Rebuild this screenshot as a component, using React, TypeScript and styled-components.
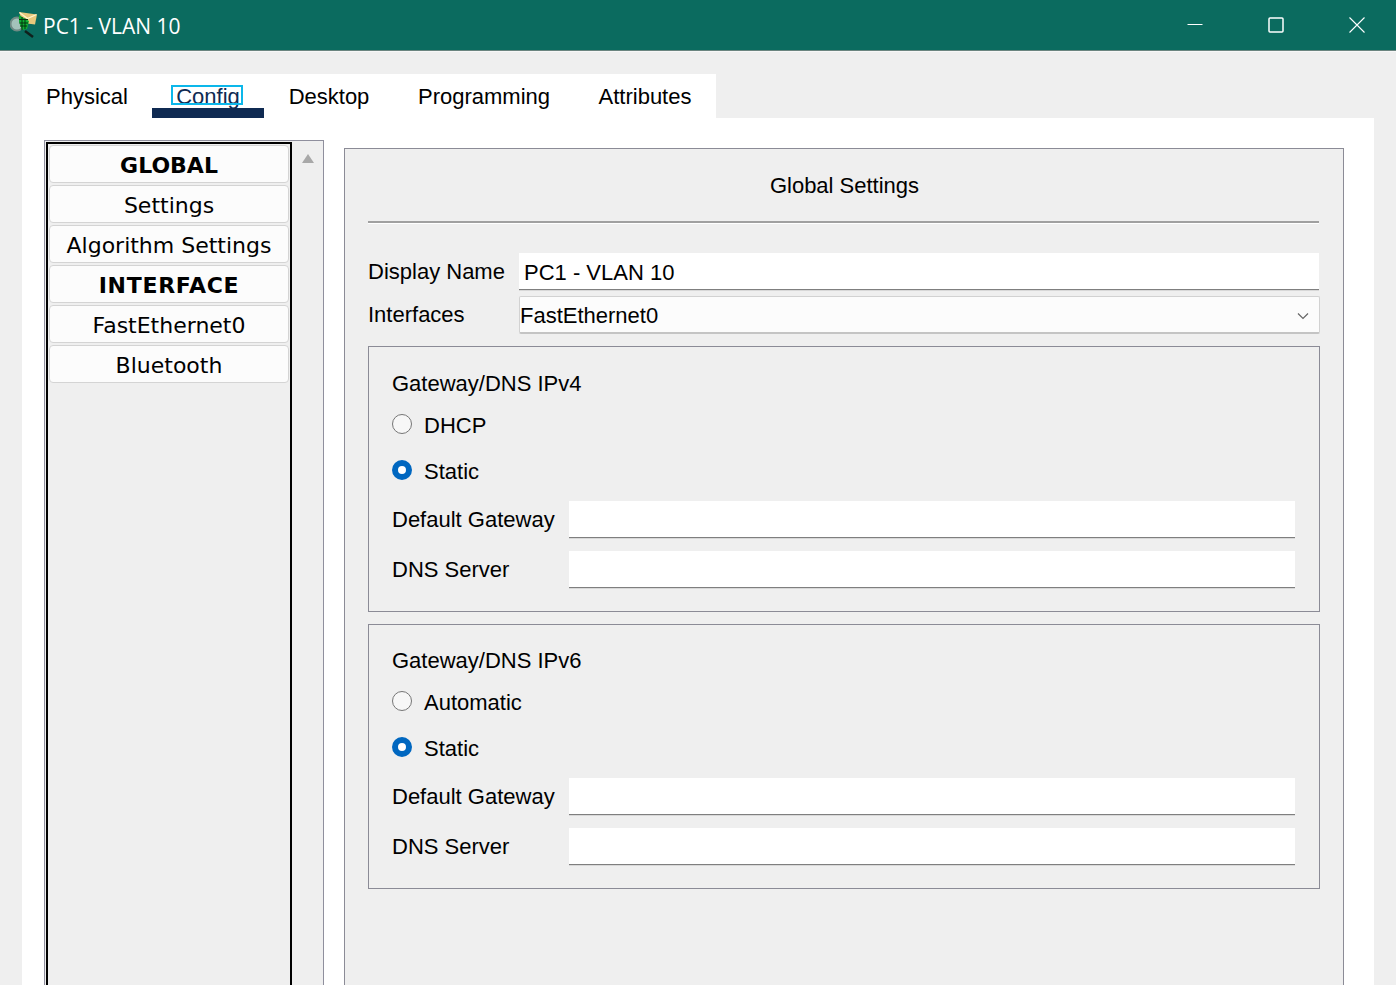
import React from 'react';
import styled, { createGlobalStyle } from 'styled-components';

const GlobalStyle = createGlobalStyle`
  html, body {
    margin: 0;
    padding: 0;
    background: #efefef;
  }
  * {
    box-sizing: border-box;
  }
`;

const Window = styled.div`
  width: 1396px;
  height: 985px;
  overflow: hidden;
  display: flex;
  flex-direction: column;
  background: #efefef;
  color: #000;
  font-family: 'Liberation Sans', Arial, sans-serif;
  font-size: 22px;
`;

const TitleBar = styled.div`
  height: 52px;
  flex: none;
  display: flex;
  align-items: center;
  padding: 0 0 2px 10px;
  background: #0b6b5f;
  border-bottom: 1px solid #f7f7f7;
  box-shadow: inset 0 -1px 0 #6b8580;
`;

const TitleText = styled.span`
  margin: 2px 0 0 5px;
  color: #fff;
  font-family: 'Open Sans', sans-serif;
  font-size: 21px;
  flex: 1;
`;

const WindowButton = styled.div`
  width: 81px;
  height: 50px;
  padding-left: 3px;
  display: flex;
  align-items: center;
  justify-content: center;
`;

const Body = styled.div`
  flex: 1;
  padding: 22px 22px 0;
  display: flex;
  flex-direction: column;
`;

const TabBar = styled.div`
  display: flex;
  align-self: flex-start;
  height: 44px;
  background: #fff;
`;

const Tab = styled.div<{ $width: number; $active?: boolean }>`
  width: ${(p) => p.$width}px;
  height: 44px;
  padding-top: 1px;
  display: flex;
  justify-content: center;
  align-items: flex-start;
  position: relative;
  color: ${(p) => (p.$active ? '#0f2a52' : '#000')};
  line-height: 44px;
  border-bottom: ${(p) => (p.$active ? '10px solid #0f2a52' : 'none')};
`;

const FocusRing = styled.span`
  position: absolute;
  left: 19px;
  top: 11px;
  width: 72px;
  height: 20px;
  border: 2px solid #0cb7ea;
`;

const Panel = styled.div`
  flex: 1;
  display: flex;
  background: #fff;
  padding: 22px 30px 0 22px;
`;

const SideFrame = styled.div`
  width: 280px;
  flex: none;
  display: flex;
  border: 1px solid #8f8f9d;
  border-bottom: none;
  background: #efefef;
  padding: 1px 0 0 1px;
`;

const SideList = styled.div`
  width: 246px;
  border: solid #000;
  border-width: 2px 2px 0 2px;
  padding: 1px 1px 0 1px;
  display: flex;
  flex-direction: column;
  gap: 2px;
`;

const SideItem = styled.div<{ $bold?: boolean; $spread?: number }>`
  height: 38px;
  flex: none;
  display: flex;
  align-items: center;
  justify-content: center;
  padding-top: 2px;
  background: #fcfcfc;
  border: 1px solid #d4d4d4;
  border-radius: 4px;
  font-family: 'DejaVu Sans', Verdana, sans-serif;
  font-size: 22px;
  font-weight: ${(p) => (p.$bold ? 700 : 400)};
  letter-spacing: ${(p) => p.$spread ?? 0}px;
  white-space: nowrap;
`;

const ScrollTrack = styled.div`
  flex: 1;
  display: flex;
  justify-content: center;
  padding: 12px 0 0 0;
`;

const ConfigFrame = styled.div`
  width: 1000px;
  margin: 8px 0 0 20px;
  border: 1px solid #8b8b96;
  border-bottom: none;
  background: #efefef;
  padding: 0 24px 0 23px;
  display: flex;
  flex-direction: column;
`;

const ConfigTitle = styled.div`
  height: 72px;
  padding: 12px 0 0 2px;
  line-height: 50px;
  text-align: center;
`;

const Divider = styled.div`
  height: 3px;
  border-top: 2px solid #a0a0a0;
  background: #fff;
  margin-bottom: 29px;
`;

const FieldRow = styled.div<{ $labelWidth: number; $height: number; $gap?: number }>`
  display: flex;
  align-items: center;
  height: ${(p) => p.$height}px;
  margin-bottom: ${(p) => p.$gap ?? 0}px;
  & > label {
    width: ${(p) => p.$labelWidth}px;
    flex: none;
    white-space: nowrap;
  }
`;

const TextField = styled.div`
  flex: 1;
  height: 100%;
  background: #fff;
  border-bottom: 1px solid #7f7f7f;
  box-shadow: 0 1px 0 #d8d8d8;
  padding: 1px 5px 0;
  line-height: 38px;
`;

const SelectField = styled.div`
  flex: 1;
  margin-right: -1px;
  height: 100%;
  background: #fcfcfc;
  border: 1px solid #d2d2d2;
  border-bottom: 2px solid #c4c4c4;
  border-radius: 2px;
  padding: 3px 10px 0 0;
  display: flex;
  align-items: center;
  justify-content: space-between;
`;

const Group = styled.div<{ $height: number; $inset: number }>`
  height: ${(p) => p.$height}px;
  margin-bottom: 12px;
  border: 1px solid #8b8b96;
  padding: ${(p) => p.$inset}px 24px 0 23px;
  display: flex;
  flex-direction: column;
  margin-right: -1px;
`;

const GroupTitle = styled.div`
  height: 50px;
  padding-top: 12px;
  line-height: 48px;
  flex: none;
  margin-bottom: 15px;
`;

const RadioRow = styled.div<{ $gap: number }>`
  display: flex;
  align-items: center;
  height: 26px;
  gap: 12px;
  margin-bottom: ${(p) => p.$gap}px;
`;

const Radio = styled.span<{ $checked?: boolean }>`
  width: 20px;
  height: 20px;
  flex: none;
  margin-bottom: 4px;
  border-radius: 50%;
  background: ${(p) => (p.$checked ? '#fff' : '#f7f7f7')};
  border: ${(p) => (p.$checked ? '6px solid #0067c0' : '1px solid #767676')};
`;

const Logo = () => (
  <svg width="28" height="30" viewBox="0 0 28 30">
    <circle cx="7" cy="14" r="6.500" fill="#a4c2ba" stroke="#6f8a84" strokeWidth="2" />
    <path d="M15 21l8 6" stroke="#10201c" strokeWidth="2.500" />
    <path d="M9 2l18 2.500-2 10-12-1.500z" fill="#e8c87c" />
    <path d="M9.500 2.500l8 6 9-4" fill="none" stroke="#fff4cc" strokeWidth="1.300" />
    <path d="M9 5l10 6-2 8-5 1-3-8z" fill="#0fae34" />
    <path d="M12 7v13M15 8.500v10.500M9 9.500h9M9.500 13h8.500M10 16h7" stroke="#04350f" strokeWidth="1" />
  </svg>
);

const Minimize = () => (
  <svg width="16" height="16" viewBox="0 0 16 16">
    <path d="M0.500 7.500h15" stroke="#fff" strokeWidth="1" />
  </svg>
);

const Maximize = () => (
  <svg width="16" height="16" viewBox="0 0 16 16">
    <rect x="1" y="1" width="14" height="14" rx="1" fill="none" stroke="#fff" strokeWidth="1.500" />
  </svg>
);

const Close = () => (
  <svg width="16" height="16" viewBox="0 0 16 16">
    <path d="M0.500 0.500l15 15M15.500 0.500l-15 15" stroke="#fff" strokeWidth="1.100" />
  </svg>
);

const ipGroup = (title: string, first: string, height: number, inset: number) => (
  <Group $height={height} $inset={inset}>
    <GroupTitle>{title}</GroupTitle>
    <RadioRow $gap={20}>
      <Radio />
      <span>{first}</span>
    </RadioRow>
    <RadioRow $gap={16}>
      <Radio $checked />
      <span>Static</span>
    </RadioRow>
    <FieldRow $labelWidth={177} $height={37} $gap={13}>
      <label>Default Gateway</label>
      <TextField />
    </FieldRow>
    <FieldRow $labelWidth={177} $height={37}>
      <label>DNS Server</label>
      <TextField />
    </FieldRow>
  </Group>
);

const sideItems = [
  { name: 'GLOBAL', bold: true },
  { name: 'Settings' },
  { name: 'Algorithm Settings' },
  { name: 'INTERFACE', bold: true, spread: 0.7 },
  { name: 'FastEthernet0' },
  { name: 'Bluetooth' },
];

const App: React.FC = () => (
  <Window>
    <GlobalStyle />
    <TitleBar>
      <Logo />
      <TitleText>PC1 - VLAN 10</TitleText>
      <WindowButton><Minimize /></WindowButton>
      <WindowButton><Maximize /></WindowButton>
      <WindowButton><Close /></WindowButton>
    </TitleBar>
    <Body>
      <TabBar>
        <Tab $width={130}>Physical</Tab>
        <Tab $width={112} $active>
          Config
          <FocusRing />
        </Tab>
        <Tab $width={130}>Desktop</Tab>
        <Tab $width={180}>Programming</Tab>
        <Tab $width={142}>Attributes</Tab>
      </TabBar>
      <Panel>
        <SideFrame>
          <SideList>
            {sideItems.map((item) => (
              <SideItem key={item.name} $bold={item.bold} $spread={item.spread}>{item.name}</SideItem>
            ))}
          </SideList>
          <ScrollTrack>
            <svg width="12" height="9" viewBox="0 0 12 9">
              <path d="M6 0l6 9H0z" fill="#a8a8a8" />
            </svg>
          </ScrollTrack>
        </SideFrame>
        <ConfigFrame>
          <ConfigTitle>Global Settings</ConfigTitle>
          <Divider />
          <FieldRow $labelWidth={151} $height={37} $gap={6}>
            <label>Display Name</label>
            <TextField>PC1 - VLAN 10</TextField>
          </FieldRow>
          <FieldRow $labelWidth={151} $height={38} $gap={12}>
            <label>Interfaces</label>
            <SelectField>
              FastEthernet0
              <svg width="12" height="8" viewBox="0 0 12 8">
                <path d="M1 1.500l5 5 5-5" fill="none" stroke="#666" strokeWidth="1.200" />
              </svg>
            </SelectField>
          </FieldRow>
          {ipGroup('Gateway/DNS IPv4', 'DHCP', 266, 1)}
          {ipGroup('Gateway/DNS IPv6', 'Automatic', 265, 0)}
        </ConfigFrame>
      </Panel>
    </Body>
  </Window>
);

export default App;
